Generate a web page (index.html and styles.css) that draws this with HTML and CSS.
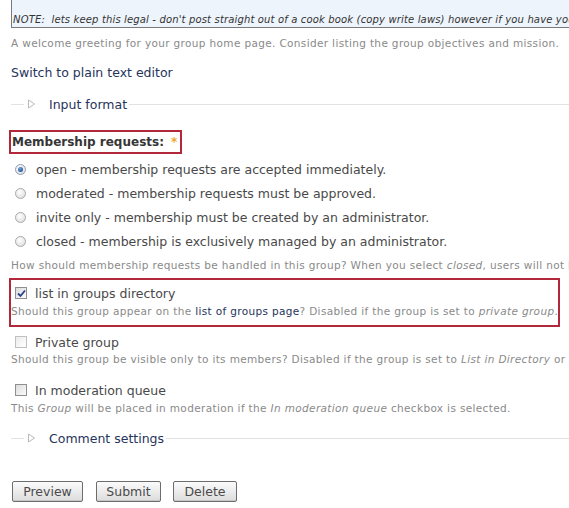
FILE: index.html
```html
<!DOCTYPE html>
<html>
<head>
<meta charset="utf-8">
<link rel="stylesheet" href="styles.css">
</head>
<body>
<div class="page">
  <div class="editor">
    <div class="editor-body"></div>
    <div class="editor-note">NOTE:&nbsp; lets keep this legal - don't post straight out of a cook book (copy write laws) however if you have your own recipe</div>
  </div>
  <div class="desc desc-welcome">A welcome greeting for your group home page. Consider listing the group objectives and mission.</div>
  <div class="switch"><a href="#">Switch to plain text editor</a></div>

  <div class="legend-row legend-input">
    <span class="legend-lead"></span>
    <svg class="tri" width="9" height="10" viewBox="0 0 9 10"><path d="M1.5 1 L7.5 5 L1.5 9 Z" fill="none" stroke="#b9b9b9" stroke-width="1"/></svg>
    <span class="legend-text">Input format</span>
    <span class="legend-line"></span>
  </div>

  <div class="highlight hl-title"><span class="title">Membership requests:</span><span class="req">*</span></div>

  <div class="radios">
    <div class="opt"><span class="radio checked"></span><span>open - membership requests are accepted immediately.</span></div>
    <div class="opt"><span class="radio"></span><span>moderated - membership requests must be approved.</span></div>
    <div class="opt"><span class="radio"></span><span>invite only - membership must be created by an administrator.</span></div>
    <div class="opt"><span class="radio"></span><span>closed - membership is exclusively managed by an administrator.</span></div>
  </div>
  <div class="desc desc-radios">How should membership requests be handled in this group? When you select <em>closed</em>, users will not be able to join or request membership.</div>

  <div class="highlight hl-dir">
    <div class="opt cb-opt"><span class="cb checked"><svg width="9" height="9" viewBox="0 0 9 9"><path d="M1 4.5 L3.5 7 L8 1.5" fill="none" stroke="#2a3f8a" stroke-width="1.8"/></svg></span><span>list in groups directory</span></div>
    <div class="desc desc-tight">Should this group appear on the <a href="#">list of groups page</a>? Disabled if the group is set to <em>private group</em>.</div>
  </div>

  <div class="item item-private">
    <div class="opt cb-opt"><span class="cb light"></span><span>Private group</span></div>
    <div class="desc desc-private">Should this group be visible only to its members? Disabled if the group is set to <em>List in Directory</em> or <em>Membership requests: open</em>.</div>
  </div>

  <div class="item item-mod">
    <div class="opt cb-opt"><span class="cb"></span><span>In moderation queue</span></div>
    <div class="desc desc-tight">This <em>Group</em> will be placed in moderation if the <em>In moderation queue</em> checkbox is selected.</div>
  </div>

  <div class="legend-row legend-comment">
    <span class="legend-lead"></span>
    <svg class="tri" width="9" height="10" viewBox="0 0 9 10"><path d="M1.5 1 L7.5 5 L1.5 9 Z" fill="none" stroke="#b9b9b9" stroke-width="1"/></svg>
    <span class="legend-text">Comment settings</span>
    <span class="legend-line"></span>
  </div>

  <div class="buttons">
    <button class="btn btn-preview">Preview</button>
    <button class="btn btn-submit">Submit</button>
    <button class="btn btn-delete">Delete</button>
  </div>
</div>
</body>
</html>
```
FILE: styles.css
```css
html, body {
  margin: 0;
  padding: 0;
  background: #fff;
}
body {
  font-family: "DejaVu Sans", Verdana, sans-serif;
  color: #494949;
  width: 569px;
  height: 508px;
  overflow: hidden;
}
.page {
  padding-left: 11px;
}
a {
  color: #26345a;
  text-decoration: none;
}
.editor {
  width: 620px;
  border: 1px solid #7a7a7a;
  border-top: none;
  background: #eef4fb;
  height: 27px;
  overflow: hidden;
}
.editor-body {
  height: 12px;
}
.editor-note {
  font-style: italic;
  font-size: 10px;
  letter-spacing: 0.15px;
  color: #333;
  white-space: nowrap;
  padding-left: 1px;
  height: 15px;
  line-height: 15px;
}
.desc {
  font-size: 10.5px;
  letter-spacing: 0.35px;
  color: #8a8a8a;
  line-height: 16px;
  white-space: nowrap;
}
.desc em {
  font-style: italic;
}
.desc-welcome {
  margin-top: 7px;
}
.switch {
  font-size: 12.5px;
  margin-top: 14px;
  line-height: 16px;
}
.legend-row {
  display: flex;
  align-items: center;
  height: 20px;
}
.legend-input {
  margin-top: 13px;
}
.legend-lead {
  width: 13px;
  border-top: 1px solid #e2e2e2;
}
.tri {
  margin-left: 3px;
  margin-right: 13px;
}
.legend-text {
  font-size: 12.5px;
  color: #26345a;
}
.legend-line {
  flex: 1;
  border-top: 1px solid #e2e2e2;
  margin-left: 2px;
}
.highlight {
  border: 2px solid #b0283a;
  margin-left: -2px;
}
.hl-title {
  margin-top: 16px;
  width: 168px;
  height: 20px;
  display: flex;
  align-items: center;
  padding-left: 1px;
  font-size: 12px;
}
.title {
  font-weight: bold;
  color: #363636;
}
.req {
  color: #eaa92c;
  margin-left: 7px;
  font-weight: bold;
}
.radios {
  margin-top: 3px;
}
.opt {
  display: flex;
  align-items: center;
  font-size: 12.5px;
  height: 24px;
}
.radio {
  width: 11px;
  height: 11px;
  border-radius: 50%;
  border: 1px solid #a9a9a9;
  background: radial-gradient(circle at 40% 35%, #ffffff 0%, #e4e4e4 70%, #cfcfcf 100%);
  margin-left: 4px;
  margin-right: 10px;
  box-sizing: border-box;
  position: relative;
  flex: none;
}
.radio.checked {
  border-color: #8d9db4;
}
.radio.checked::after {
  content: "";
  position: absolute;
  left: 2px;
  top: 2px;
  width: 5px;
  height: 5px;
  border-radius: 50%;
  background: radial-gradient(circle at 40% 35%, #6fa5e0 0%, #1f4f93 80%);
}
.desc-radios {
  margin-top: 4px;
}
.hl-dir {
  margin-top: 5px;
  width: 547px;
  height: 44px;
  padding-top: 1px;
}
.desc-tight {
  margin-top: -2px;
}
.cb {
  width: 12px;
  height: 12px;
  box-sizing: border-box;
  border: 1px solid #8f8f8f;
  background: linear-gradient(135deg, #dcdcdc, #fbfbfb);
  margin-left: 4px;
  margin-right: 8px;
  display: flex;
  align-items: center;
  justify-content: center;
  flex: none;
}
.cb.light {
  border-color: #c0c0c0;
  background: linear-gradient(135deg, #ececec, #ffffff);
}
.item-private {
  margin-top: 3px;
}
.desc-private {
  margin-top: -3px;
}
.item-mod {
  margin-top: 11px;
}
.legend-comment {
  margin-top: 12px;
}
.buttons {
  display: flex;
  margin-top: 33px;
  margin-left: 1px;
}
.btn {
  font-family: "DejaVu Sans", Verdana, sans-serif;
  font-size: 12.5px;
  color: #4a4a4a;
  height: 21px;
  padding: 0;
  border: 1px solid #6d6d6d;
  border-radius: 2px;
  background: linear-gradient(#fbfbfb, #dcdcdc);
  box-shadow: inset 0 -1px 0 #c6c6c6;
}
.btn-preview { width: 71px; }
.btn-submit { width: 65px; margin-left: 13px; }
.btn-delete { width: 64px; margin-left: 12px; }
```
